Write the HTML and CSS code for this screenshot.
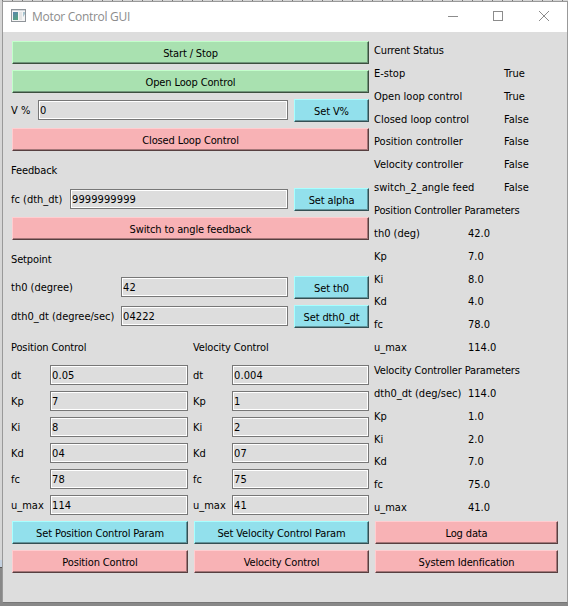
FILE: index.html
```html
<!DOCTYPE html>
<html lang="en">
<head>
<meta charset="utf-8">
<title>Motor Control GUI</title>
<link rel="stylesheet" href="styles.css">
</head>
<body>
<main class="window">
  <header class="titlebar">
    <svg class="app-icon" width="15" height="13" viewBox="0 0 15 13">
      <defs><linearGradient id="g" x1="0" y1="0" x2="0.5" y2="1"><stop offset="0" stop-color="#5a83ad"/><stop offset="1" stop-color="#55a284"/></linearGradient></defs>
      <rect x=".5" y=".5" width="14" height="12" fill="#f5f5f5" stroke="#8f9499"/>
      <path d="M1 1.5h13" stroke="#d5d8dc"/>
      <rect x="2" y="3" width="5" height="8" fill="url(#g)"/>
      <rect x="8" y="3" width="3" height="8" fill="#e5e5e5"/>
      <path d="M12 3h2v2l-2 3z" fill="#a9c5d0"/>
    </svg>
    <h1>Motor Control GUI</h1>
    <svg class="controls" width="112" height="12" viewBox="0 0 112 12" fill="none" stroke="#8c8c8c">
      <path d="M0 6.5h10"/><rect x="45.5" y="1.5" width="9" height="9"/><path d="M91 1l10 10M101 1L91 11"/>
    </svg>
  </header>
  <div class="content">
    <section class="left">
      <button class="btn green">Start / Stop</button>
      <button class="btn green">Open Loop Control</button>
      <div class="row volt"><label>V %</label><input value="0"><button class="btn blue">Set V%</button></div>
      <button class="btn pink">Closed Loop Control</button>
      <h2>Feedback</h2>
      <div class="row alpha"><label>fc (dth_dt)</label><input value="9999999999"><button class="btn blue">Set alpha</button></div>
      <button class="btn pink">Switch to angle feedback</button>
      <h2 class="setpoint">Setpoint</h2>
      <div class="row set"><label>th0 (degree)</label><input value="42"><button class="btn blue">Set th0</button></div>
      <div class="row set"><label>dth0_dt (degree/sec)</label><input value="04222"><button class="btn blue">Set dth0_dt</button></div>
      <div class="params">
        <section>
          <h2>Position Control</h2>
          <div class="fields">
            <label>dt</label><input value="0.05">
            <label>Kp</label><input value="7">
            <label>Ki</label><input value="8">
            <label>Kd</label><input value="04">
            <label>fc</label><input value="78">
            <label>u_max</label><input value="114">
          </div>
          <button class="btn blue">Set Position Control Param</button>
          <button class="btn pink">Position Control</button>
        </section>
        <section>
          <h2>Velocity Control</h2>
          <div class="fields">
            <label>dt</label><input value="0.004">
            <label>Kp</label><input value="1">
            <label>Ki</label><input value="2">
            <label>Kd</label><input value="07">
            <label>fc</label><input value="75">
            <label>u_max</label><input value="41">
          </div>
          <button class="btn blue">Set Velocity Control Param</button>
          <button class="btn pink">Velocity Control</button>
        </section>
      </div>
    </section>
    <aside class="right">
      <div class="stats">
        <div class="stat head"><span>Current Status</span></div>
        <div class="stat wide"><span>E-stop</span><b>True</b></div>
        <div class="stat wide"><span>Open loop control</span><b>True</b></div>
        <div class="stat wide"><span>Closed loop control</span><b>False</b></div>
        <div class="stat wide"><span>Position controller</span><b>False</b></div>
        <div class="stat wide"><span>Velocity controller</span><b>False</b></div>
        <div class="stat wide"><span>switch_2_angle feed</span><b>False</b></div>
        <div class="stat head"><span>Position Controller Parameters</span></div>
        <div class="stat"><span>th0 (deg)</span><b>42.0</b></div>
        <div class="stat"><span>Kp</span><b>7.0</b></div>
        <div class="stat"><span>Ki</span><b>8.0</b></div>
        <div class="stat"><span>Kd</span><b>4.0</b></div>
        <div class="stat"><span>fc</span><b>78.0</b></div>
        <div class="stat"><span>u_max</span><b>114.0</b></div>
        <div class="stat head"><span>Velocity Controller Parameters</span></div>
        <div class="stat"><span>dth0_dt (deg/sec)</span><b>114.0</b></div>
        <div class="stat"><span>Kp</span><b>1.0</b></div>
        <div class="stat"><span>Ki</span><b>2.0</b></div>
        <div class="stat"><span>Kd</span><b>7.0</b></div>
        <div class="stat"><span>fc</span><b>75.0</b></div>
        <div class="stat"><span>u_max</span><b>41.0</b></div>
      </div>
      <button class="btn pink">Log data</button>
      <button class="btn pink">System Idenfication</button>
    </aside>
  </div>
</main>
</body>
</html>
```
FILE: styles.css
```css
* { box-sizing: border-box; }
body {
  margin: 0;
  width: 568px;
  height: 606px;
  padding: 1px 0 0 2px;
  overflow: hidden;
  background:
    repeating-linear-gradient(90deg, #777 0 1px, transparent 1px 10px) 2px 0 / 100% 1px no-repeat,
    linear-gradient(#d6d6d6 0 560px, #c3d0df 560px 567px, #555 567px 568px, #888 568px);
  font: 11px/13px "DejaVu Sans Condensed", "DejaVu Sans", sans-serif;
  font-stretch: condensed;
  letter-spacing: -0.13px;
  color: #000;
}
.window {
  width: 566px;
  height: 602px;
  border: 1px solid #999;
  border-bottom-color: #777;
  background: #ddd;
}
.titlebar {
  display: flex;
  align-items: center;
  height: 30px;
  padding: 0 0 2px 8px;
  background: #fff;
}
.app-icon { margin-bottom: 1px; }
.titlebar h1 {
  flex: 1;
  margin: 2px 0 0 6px;
  font: 12px/16px "Open Sans", sans-serif;
  letter-spacing: -0.3px;
  color: #8c8c8c;
}
.controls { margin-right: 7px; }
.content {
  display: flex;
  gap: 6px;
  padding: 9px 9px 0 9px;
}
.left { width: 357px; }
.left, .params section { display: flex; flex-direction: column; gap: 6px; }
.btn {
  display: block;
  width: 100%;
  height: 23px;
  margin: 0;
  padding: 1px 0 0;
  border: 1px solid;
  border-radius: 0;
  font: inherit;
  letter-spacing: inherit;
  color: #000;
  text-align: center;
  white-space: nowrap;
}
.green { background: #a9e1b0; border-color: #c3ffcb #3c4f3e #3c4f3e #c3ffcb; box-shadow: inset -1px -1px #70967a; }
.blue { background: #92e0ec; border-color: #a8ffff #344f53 #344f53 #a8ffff; box-shadow: inset -1px -1px #61959d; }
.pink { background: #f8b2b5; border-color: #ffcdd0 #573f40 #573f40 #ffcdd0; box-shadow: inset -1px -1px #a57779; }
h2 { margin: 0 0 0 -1px; height: 25px; padding-top: 7px; font: inherit; }
.setpoint { height: 24px; }
label { margin-left: -1px; white-space: nowrap; letter-spacing: 0; }
input {
  display: block;
  width: 100%;
  height: 20px;
  margin: 0;
  padding: 1px 0 0 1px;
  border: 1px solid #777;
  border-radius: 0;
  box-shadow: inset 0 0 0 1px #fff;
  background: #ddd;
  font: inherit;
  letter-spacing: 0.1px;
  color: #000;
}
.row { display: grid; column-gap: 6px; align-items: center; }
.volt { grid-template-columns: 20px 250px 75px; }
.alpha { grid-template-columns: 52px 218px 75px; }
.set { grid-template-columns: 103px 167px 75px; }
.row input { margin-bottom: 1px; }
.params { display: grid; grid-template-columns: 176px 175px; gap: 6px; }
.fields {
  display: grid;
  grid-template-columns: 32px 1fr;
  grid-auto-rows: 20px;
  gap: 6px;
  align-items: center;
}
.right { width: 183px; margin-top: -2px; }
.stats { height: 482px; margin-left: -1px; }
.stat { display: flex; height: 22.86px; align-items: center; white-space: nowrap; letter-spacing: 0; }
.stat.head { letter-spacing: -0.15px; }
.stat span { width: 94px; }
.stat.wide span { width: 130px; }
.stat b { font-weight: normal; }
.right .btn + .btn { margin-top: 6px; }
```
